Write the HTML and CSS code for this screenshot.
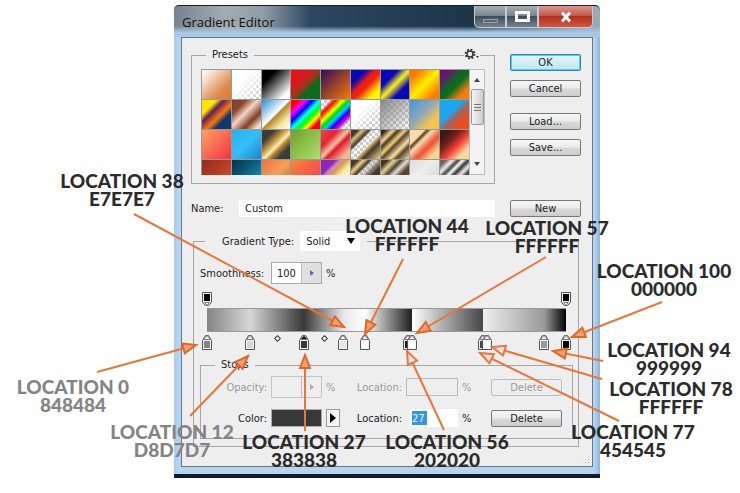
FILE: index.html
```html
<!DOCTYPE html>
<html lang="en">

<head>
    <title>Gradient Editor</title>
    <meta charset="utf-8">
    <meta name="viewport" content="width=device-width, initial-scale=1.0">
    <link rel="stylesheet" href="styles.css">
</head>

<body>
    <main class="canvas">
        <section class="dialog">
            <header class="titlebar">
                <h1>Gradient Editor</h1>
                <div class="window-buttons">
                    <button class="minimize" aria-label="Minimize"></button>
                    <button class="maximize" aria-label="Maximize"></button>
                    <button class="close" aria-label="Close">
                        <svg width="12" height="12" viewBox="0 0 12 12">
                            <path d="M2 1.500 L10 10.500 M10 1.500 L2 10.500" stroke="#fff" stroke-width="3" />
                        </svg>
                    </button>
                </div>
            </header>

            <form class="panel">
                <div class="top">
                    <fieldset class="presets">
                        <legend>Presets</legend>
                        <button type="button" class="gear" aria-label="Preset options">
                            <svg width="16" height="12" viewBox="0 0 16 12">
                                <circle cx="6" cy="6" r="3" fill="none" stroke="#333" stroke-width="1.500" />
                                <circle cx="6" cy="6" r="4.500" fill="none" stroke="#333" stroke-width="1.800" stroke-dasharray="1.800 1.734" />
                                <path d="M12 8h3l-1.500 2z" fill="#333" />
                            </svg>
                        </button>
                        <div class="preset-list">
                            <div class="swatches" id="swatches"></div>
                            <div class="scrollbar">
                                <span class="up"></span>
                                <span class="thumb"></span>
                                <span class="down"></span>
                            </div>
                        </div>
                    </fieldset>
                    <div class="actions">
                        <button type="button" class="btn ok">OK</button>
                        <button type="button" class="btn">Cancel</button>
                        <button type="button" class="btn load">Load...</button>
                        <button type="button" class="btn">Save...</button>
                    </div>
                </div>

                <div class="name-row">
                    <label for="name">Name:</label>
                    <input type="text" id="name" value="Custom">
                    <button type="button" class="btn">New</button>
                </div>

                <fieldset class="gradient">
                    <legend>
                        <label for="type">Gradient Type:</label>
                        <span class="select">
                            <select id="type">
                                <option>Solid</option>
                                <option>Noise</option>
                            </select>
                        </span>
                    </legend>
                    <div class="smooth">
                        <label for="smoothness">Smoothness:</label>
                        <span class="spin">
                            <input type="text" id="smoothness" value="100">
                            <button type="button" aria-label="Smoothness slider"></button>
                        </span>
                        <span>%</span>
                    </div>

                    <div class="ramp">
                        <div class="track" id="opacityStops"></div>
                        <div class="bar"></div>
                        <div class="track" id="colorStops"></div>
                    </div>

                    <fieldset class="stops">
                        <legend>Stops</legend>
                        <div class="stop-row disabled">
                            <label for="opacity">Opacity:</label>
                            <span class="spin">
                                <input type="text" id="opacity" disabled>
                                <button type="button" aria-label="Opacity slider" disabled></button>
                            </span>
                            <span>%</span>
                            <label for="opacityLocation">Location:</label>
                            <input type="text" id="opacityLocation" disabled>
                            <span>%</span>
                            <button type="button" class="btn" disabled>Delete</button>
                        </div>
                        <div class="stop-row">
                            <label for="color">Color:</label>
                            <button type="button" id="color" class="color"></button>
                            <button type="button" class="color-menu" aria-label="Color menu"></button>
                            <label for="location">Location:</label>
                            <span class="field"><input type="text" id="location" class="selected" value="27"></span>
                            <span>%</span>
                            <button type="button" class="btn">Delete</button>
                        </div>
                    </fieldset>
                </fieldset>
                <span class="grip"></span>
            </form>
        </section>

        <svg class="arrows" width="740" height="493" viewBox="0 0 740 493">
            <defs>
                <marker id="full" markerUnits="userSpaceOnUse" markerWidth="18" markerHeight="14" refX="15" refY="7" orient="auto">
                    <path d="M2 2 L15 7 L2 12z" fill="#f0a070" stroke="#e0672c" stroke-width="2" />
                </marker>
                <marker id="open" markerUnits="userSpaceOnUse" markerWidth="18" markerHeight="14" refX="15" refY="7" orient="auto">
                    <path d="M2 2 L15 7 L2 12z" fill="#eee0d8" stroke="#e8783f" stroke-width="2" />
                </marker>
            </defs>
            <g class="full">
                <path d="M134 214 L344 327" />
                <path d="M403 259 L365 334" />
                <path d="M546 257 L417 333" />
                <path d="M662 302 L572 337" />
                <path d="M97 372 L196 345" />
                <path d="M190 416 L248 356" />
                <path d="M305 431 L305 355" />
                <path d="M603 361 L553 351" />
            </g>
            <g class="open">
                <path d="M444 430 L407 351" />
                <path d="M602 379 L492 347" />
                <path d="M619 421 L480 353" />
            </g>
        </svg>

        <p class="note n38">LOCATION 38<br>E7E7E7</p>
        <p class="note n44">LOCATION 44<br>FFFFFF</p>
        <p class="note n57">LOCATION 57<br>FFFFFF</p>
        <p class="note n100">LOCATION 100<br>000000</p>
        <p class="note n94">LOCATION 94<br>999999</p>
        <p class="note n78">LOCATION 78<br>FFFFFF</p>
        <p class="note n77">LOCATION 77<br>454545</p>
        <p class="note n56">LOCATION 56<br>202020</p>
        <p class="note n27">LOCATION 27<br>383838</p>
        <p class="note light n12">LOCATION 12<br>D8D7D7</p>
        <p class="note light n0">LOCATION 0<br>848484</p>
    </main>
    <script src="script.js"></script>
</body>

</html>
```

FILE: styles.css
```css
*,
*::before,
*::after {
    box-sizing: border-box;
}

body {
    margin: 0;
    background-color: white;
    font-family: "DejaVu Sans Condensed", "DejaVu Sans", sans-serif;
    font-size: 11px;
    color: #222;
}

button,
input,
select {
    font: inherit;
    color: inherit;
    margin: 0;
    padding: 0;
    border-radius: 0;
}

.canvas {
    position: relative;
    padding: 5px 140px 15px 174px;
}

/* window */

.dialog {
    padding: 0 7px 7px;
    border-bottom: 4px solid #0e1c2b;
    border-radius: 5px 5px 0 0;
    background: linear-gradient(90deg, #a9cdec, #b9d5ee 6px, #b9d5ee calc(100% - 6px), #8fb4da);
}

.titlebar {
    display: flex;
    justify-content: space-between;
    height: 32px;
    margin: 0 -7px;
    padding: 0 7px 0 8px;
    border-top: 1px solid #14202c;
    border-radius: 5px 5px 0 0;
    background: linear-gradient(180deg, transparent 65%, #a9c6e2 85%), linear-gradient(90deg, #77848e, #a3abb0 12%, #8f9ca6 21%, #2c4760 32%, #1e3548 70%, #9aa9b8 97%);
}

h1 {
    margin: 0;
    padding-top: 7px;
    font-family: "Open Sans", sans-serif;
    font-size: 13px;
    font-weight: normal;
    line-height: 18px;
    color: #111;
}

.window-buttons {
    display: flex;
    height: 22px;
}

.window-buttons button {
    display: flex;
    align-items: center;
    justify-content: center;
    width: 32px;
    border: 1px solid #c3cbd2;
    border-top: 0;
    background: linear-gradient(#a5adb4, #7c8791 45%, #3f4d5a 50%, #75838f);
}

.window-buttons .minimize {
    border-radius: 0 0 0 5px;
}

.minimize::before {
    content: "";
    width: 15px;
    height: 4px;
    margin-top: 8px;
    border: 1px solid #9aa3aa;
}

.maximize::before {
    content: "";
    width: 15px;
    height: 11px;
    border: 3px solid white;
}

.window-buttons .close {
    width: 55px;
    border-radius: 0 0 5px 0;
    background: linear-gradient(#d99a90, #c5584a 45%, #b0301f 50%, #d0583f);
}

.panel {
    position: relative;
    padding: 9px 11px 19px 9px;
    border: 1px solid #5f7892;
    background-color: #eeeeee;
}

/* presets */

fieldset {
    min-width: 0;
    margin: 0;
    padding: 0;
    border: 1px solid #a5a5a5;
}

.top {
    display: flex;
    gap: 15px;
}

.presets {
    position: relative;
    flex: 1;
    padding: 6px 9px 8px;
}

.presets legend {
    margin-left: 5px;
    padding: 0 6px;
    line-height: 16px;
}

.gear {
    position: absolute;
    top: -15px;
    right: 14px;
    display: flex;
    border: 0;
    background-color: #eeeeee;
}

.preset-list {
    display: flex;
    height: 106px;
}

.swatches {
    flex: 1;
    display: grid;
    grid-template-columns: repeat(9, 1fr);
    grid-auto-rows: 30px;
    overflow: hidden;
}

.swatches button {
    border: 1px solid #999;
    border-width: 1px 0 0 1px;
}

.scrollbar {
    display: flex;
    flex-direction: column;
    align-items: center;
    width: 16px;
    border: 1px solid #bbb;
    background-color: #f4f4f4;
}

.up,
.down {
    border: 3px solid transparent;
}

.up {
    margin: 5px 0 7px;
    border-bottom: 4px solid #444;
}

.down {
    margin: auto 0 5px;
    border-top: 4px solid #444;
}

.thumb {
    width: 13px;
    height: 36px;
    border: 1px solid #999;
    border-radius: 2px;
    background: linear-gradient(#777, #777) center 14px / 7px 1px no-repeat, linear-gradient(#777, #777) center 17px / 7px 1px no-repeat, linear-gradient(#777, #777) center 20px / 7px 1px no-repeat, linear-gradient(90deg, #f6f6f6, #ccc);
}

/* buttons */

.actions {
    display: flex;
    flex-direction: column;
    gap: 9px;
    width: 71px;
    padding-top: 7px;
}

.btn {
    width: 71px;
    height: 17px;
    border: 1px solid #777;
    border-radius: 2px;
    background: linear-gradient(#f6f6f6, #ebebeb 48%, #d9d9d9 52%, #cecece);
    line-height: 15px;
}

.ok {
    border-color: #2d86a8;
    box-shadow: inset 0 0 0 1px #4fd0f5;
    background: linear-gradient(#e8f6fb, #bfe4f3);
}

.load {
    margin-top: 7px;
}

.btn:disabled {
    border-color: #bbb;
    background: #eeeeee;
    color: #999;
}

/* name */

.name-row {
    display: flex;
    align-items: center;
    gap: 15px;
    height: 17px;
    margin-top: 16px;
}

.name-row label {
    width: 33px;
}

input {
    border: 0;
    background-color: white;
}

.name-row input {
    flex: 1;
    min-width: 0;
    height: 17px;
    padding-left: 6px;
}

/* gradient type */

.gradient {
    margin: 14px 2px 0;
    padding: 11px 5px 7px 6px;
}

.gradient > legend {
    display: flex;
    align-items: center;
    gap: 6px;
    height: 20px;
    margin-left: 5px;
    padding: 0 7px 0 17px;
}

.select {
    position: relative;
}

.select::after {
    content: "";
    position: absolute;
    top: 7px;
    right: 5px;
    border: 4px solid transparent;
    border-top: 6px solid black;
    border-bottom: 0;
}

select {
    display: block;
    width: 60px;
    height: 20px;
    padding-left: 6px;
    border: 0;
    background-color: white;
    appearance: none;
}

.smooth {
    display: flex;
    align-items: center;
    gap: 4px;
}

.smooth label {
    width: 67px;
}

.spin {
    display: flex;
    width: 51px;
    height: 22px;
    border: 1px solid #aaa;
}

.spin input {
    width: 29px;
    padding-left: 5px;
}

.spin button {
    display: flex;
    flex: 1;
    align-items: center;
    justify-content: center;
    border: 0;
    border-left: 1px solid #bbb;
    background-color: #dfdfdf;
}

.spin button::before {
    content: "";
    border: 3px solid transparent;
    border-left: 4px solid #67689b;
    border-right: 0;
}

.ramp {
    margin: 7px 7px 0;
}

.track {
    position: relative;
    height: 17px;
}

.bar {
    height: 24px;
    margin-bottom: 2px;
    border: 1px solid #999;
    border-width: 1px 0;
    background: linear-gradient(90deg, #848484, #d8d7d7 12%, #383838 27%, #e7e7e7 38%, #fff 44%, #202020 57%, #fff 57%, #454545 77%, #eee 77%, #999 94%, #000);
}

.stop {
    position: absolute;
    top: 0;
    width: 12px;
    height: 17px;
    margin-left: -6px;
    border: 0;
    background: none;
}

.stop svg {
    display: block;
}

.midpoint {
    position: absolute;
    top: 2px;
    width: 5px;
    height: 5px;
    margin-left: -2px;
    border: 1px solid #333;
    background-color: white;
    transform: rotate(45deg);
}

/* stops */

.stops {
    margin-top: 6px;
    padding: 3px 10px 9px 0;
}

.stops legend {
    margin-left: 14px;
    padding: 0 6px;
    line-height: 16px;
}

.stop-row {
    display: grid;
    grid-template-columns: 66px 51px 18px 1fr 52px 25px 71px;
    column-gap: 4px;
    align-items: center;
    height: 22px;
}

.stop-row + .stop-row {
    margin-top: 9px;
}

.stop-row label {
    text-align: right;
}

.disabled {
    color: #999;
}

.disabled .spin {
    border-color: #c4c4c4;
}

.disabled input,
.disabled .spin button {
    background-color: #eeeeee;
}

.disabled .spin button::before {
    border-left-color: #aaa;
}

.disabled > input {
    width: 52px;
    height: 18px;
    border: 1px solid #bbb;
}

.color {
    height: 18px;
    border: 1px solid #aaa;
    background-color: #383838;
}

.color-menu {
    display: flex;
    align-items: center;
    justify-content: center;
    width: 14px;
    height: 18px;
    border: 1px solid #999;
    background-color: #f4f4f4;
}

.color-menu::before {
    content: "";
    border: 5px solid transparent;
    border-left: 6px solid black;
    border-right: 0;
}

.field {
    height: 18px;
    margin-left: 4px;
    padding: 2px;
    background-color: white;
}

.selected {
    display: block;
    width: 15px;
    height: 14px;
    background-color: #3593f0;
    color: white;
}

.grip {
    position: absolute;
    right: 2px;
    bottom: 2px;
    width: 9px;
    height: 9px;
    background: radial-gradient(#aaa 1px, transparent 1px) 0 0 / 3px 3px;
    clip-path: polygon(100% 0, 100% 100%, 0 100%);
}

/* notes and arrows over the window */

.arrows {
    position: absolute;
    top: 0;
    left: 0;
    pointer-events: none;
}

.arrows g {
    fill: none;
    stroke: #e67639;
    stroke-width: 2;
}

.full > path {
    marker-end: url(#full);
}

.open > path {
    marker-end: url(#open);
}

.note {
    position: absolute;
    width: 140px;
    margin: 0;
    font-family: Lato, sans-serif;
    font-size: 19px;
    font-weight: 900;
    line-height: 18px;
    text-align: center;
    white-space: nowrap;
    color: #2b2b2b;
}

.light {
    color: #848484;
}

.n38 {
    top: 172px;
    left: 52px;
}

.n44 {
    top: 217px;
    left: 337px;
}

.n57 {
    top: 219px;
    left: 477px;
}

.n100 {
    top: 262px;
    left: 594px;
}

.n94 {
    top: 341px;
    left: 599px;
}

.n78 {
    top: 380px;
    left: 601px;
}

.n77 {
    top: 423px;
    left: 563px;
}

.n56 {
    top: 433px;
    left: 377px;
}

.n27 {
    top: 433px;
    left: 234px;
}

.n12 {
    top: 423px;
    left: 102px;
}

.n0 {
    top: 378px;
    left: 3px;
}
```

FILE: script.js
```js
const checker = "repeating-conic-gradient(#ccc 0 25%, #fff 0 50%) 0 0 / 6px 6px";

// colour stops of every preset, all drawn at the same angle
const presets = [
    "#fff, #f5dcc8 25%, #dc8b4c 70%, #d97b32",
    "#fff 35%, transparent",
    "#000 25%, #fff 85%",
    "#e5121b 25%, #a5321d 50%, #0b6b1f 65%",
    "#2d0b63, #8c3c30 45%, #f47d05",
    "#0a08b5 25%, #f0200f 45%, #f0200f 55%, #fff200 80%",
    "#0a08b5 30%, #f9f21c 50%, #0a08b5 72%",
    "#ff7900 15%, #ffef00 50%, #ff7900 85%",
    "#6b107a 15%, #0b6b1f 45%, #0b6b1f 55%, #fb7b08 80%",

    "#ffe600 25%, #64205c 38%, #f97a0c 58%, #14376b 72%",
    "#7d3e26, #8a4a33 25%, #f3d4c6 45%, #7d3e26 70%, #f7dccd 90%",
    "#2b8cd5, #fff 48%, #b1882b 52%, #f6e2a0 75%, #fff",
    "#f00 12%, #f0f 25%, #00f 38%, #0ff 50%, #0f0 63%, #ff0 74%, #f00 85%",
    "transparent 15%, #f00 25%, #ff0 38%, #0d0 48%, #0cf 57%, #20f 67%, #d0c 77%, transparent 85%",
    "#fff 35%, transparent 80%",
    "#888, transparent",
    "#4893df, #8da9b7 45%, #f5c44f 75%",
    "#1ba7ef 40%, #9c6763 55%, #ee4b22 75%",

    "#f9a45f, #f56b56 50%, #fa2f43",
    "#21b4ef, #35bdf5 50%, #1a85d4",
    "#3e3b36 22%, #d3a248 43%, #fff0b8 54%, #be8830 62%, #3c3b37 78%",
    "#6f9f32, #8dc149 50%, #b3dd70",
    "#ee4344, #e52237 30%, #fbc2a0 48%, #df172c 58%, #f8b98f 85%",
    "#443a2c 12%, #e3c07b 20%, #443a2c 32%, transparent 38%, transparent 55%, #c7a968 60%, #443a2c 70%, #f5d18c",
    "#33291b 8%, #f5d795 22%, #493720 31%, #f4ce7d 43%, #59462c 51%, #f6df9f 67%, #58442b 77%, #f6df9f",
    "#f6ddb0 25%, #5d3b1c 30%, #f6ddb0 39%, #f14d37 60%, #f7d58e 82%",
    "#391a14 15%, #722019 35%, #f34235 57%, #f5d9a0 80%",

    "#8f2d20, #b93c23 50%, #cc6640",
    "#053449, #0a5877 40%, #1ba9d6",
    "#ef7040, #f2a158 50%, #a66935",
    "#f9863e, #f45f46 50%, #f14141",
    "#8a27b5 25%, #d289c6 34%, #d49f43 43%, #fff0b0 60%",
    "#443a2c 12%, #f5d18c 22%, #443a2c 33%, transparent 40%, #443a2c 62%",
    "#453620 12%, #e8d39b 24%, #51432e 36%, #ddd 47%, #5b472c 60%",
    "#ddd, #eee 40%, #ccc",
    "#666 10%, #eee 22%, #444 32%, #fff 40%, #333 49%, #eee 60%, #444 70%"
];

const opacityStops = [[0, "#000"], [100, "#000"]];
const colorStops = [
    [0, "#848484"], [12, "#d8d7d7"], [27, "#383838"], [38, "#e7e7e7"], [44, "#ffffff"],
    [56, "#202020"], [57, "#ffffff"], [77, "#454545"], [78, "#ffffff"], [94, "#999999"], [100, "#000000"]
];
const midpoints = [19.5, 32.5];

const swatches = document.querySelector("#swatches");
presets.forEach((stops, i) => {
    const swatch = document.createElement("button");
    swatch.type = "button";
    swatch.ariaLabel = `Preset ${i + 1}`;
    swatch.style.background = `linear-gradient(135deg, ${stops}), ${checker}`;
    swatches.appendChild(swatch);
});

function addStop(dest, [location, color], path, boxY, tip) {
    const stop = document.createElement("button");
    stop.type = "button";
    stop.className = "stop";
    stop.ariaLabel = `Stop ${location}%`;
    stop.style.left = `${location}%`;
    stop.innerHTML = `<svg width="12" height="17" viewBox="0 0 12 17">
        <path d="${path}" fill="#f4f4f4" stroke="#555"/>
        <path d="${tip}" fill="${location == 27 ? "#111" : "#fff"}" stroke="#777"/>
        <rect x="3" y="${boxY}" width="6" height="7" fill="${color}"/></svg>`;
    dest.appendChild(stop);
}

const opacityTrack = document.querySelector("#opacityStops");
const colorTrack = document.querySelector("#colorStops");
opacityStops.forEach(s => addStop(opacityTrack, s, "M1.5 1.5h9v10l-3 3h-3l-3-3z", 3, "M3.5 11.5h5l-2.500 3z"));
colorStops.forEach(s => addStop(colorTrack, s, "M1.5 15.5v-9l3-5h3l3 5v9z", 7, "M2.500 5.500l3.500-4 3.500 4z"));

midpoints.forEach(m => {
    const mid = document.createElement("span");
    mid.className = "midpoint";
    mid.style.left = `${m}%`;
    colorTrack.appendChild(mid);
});
```
